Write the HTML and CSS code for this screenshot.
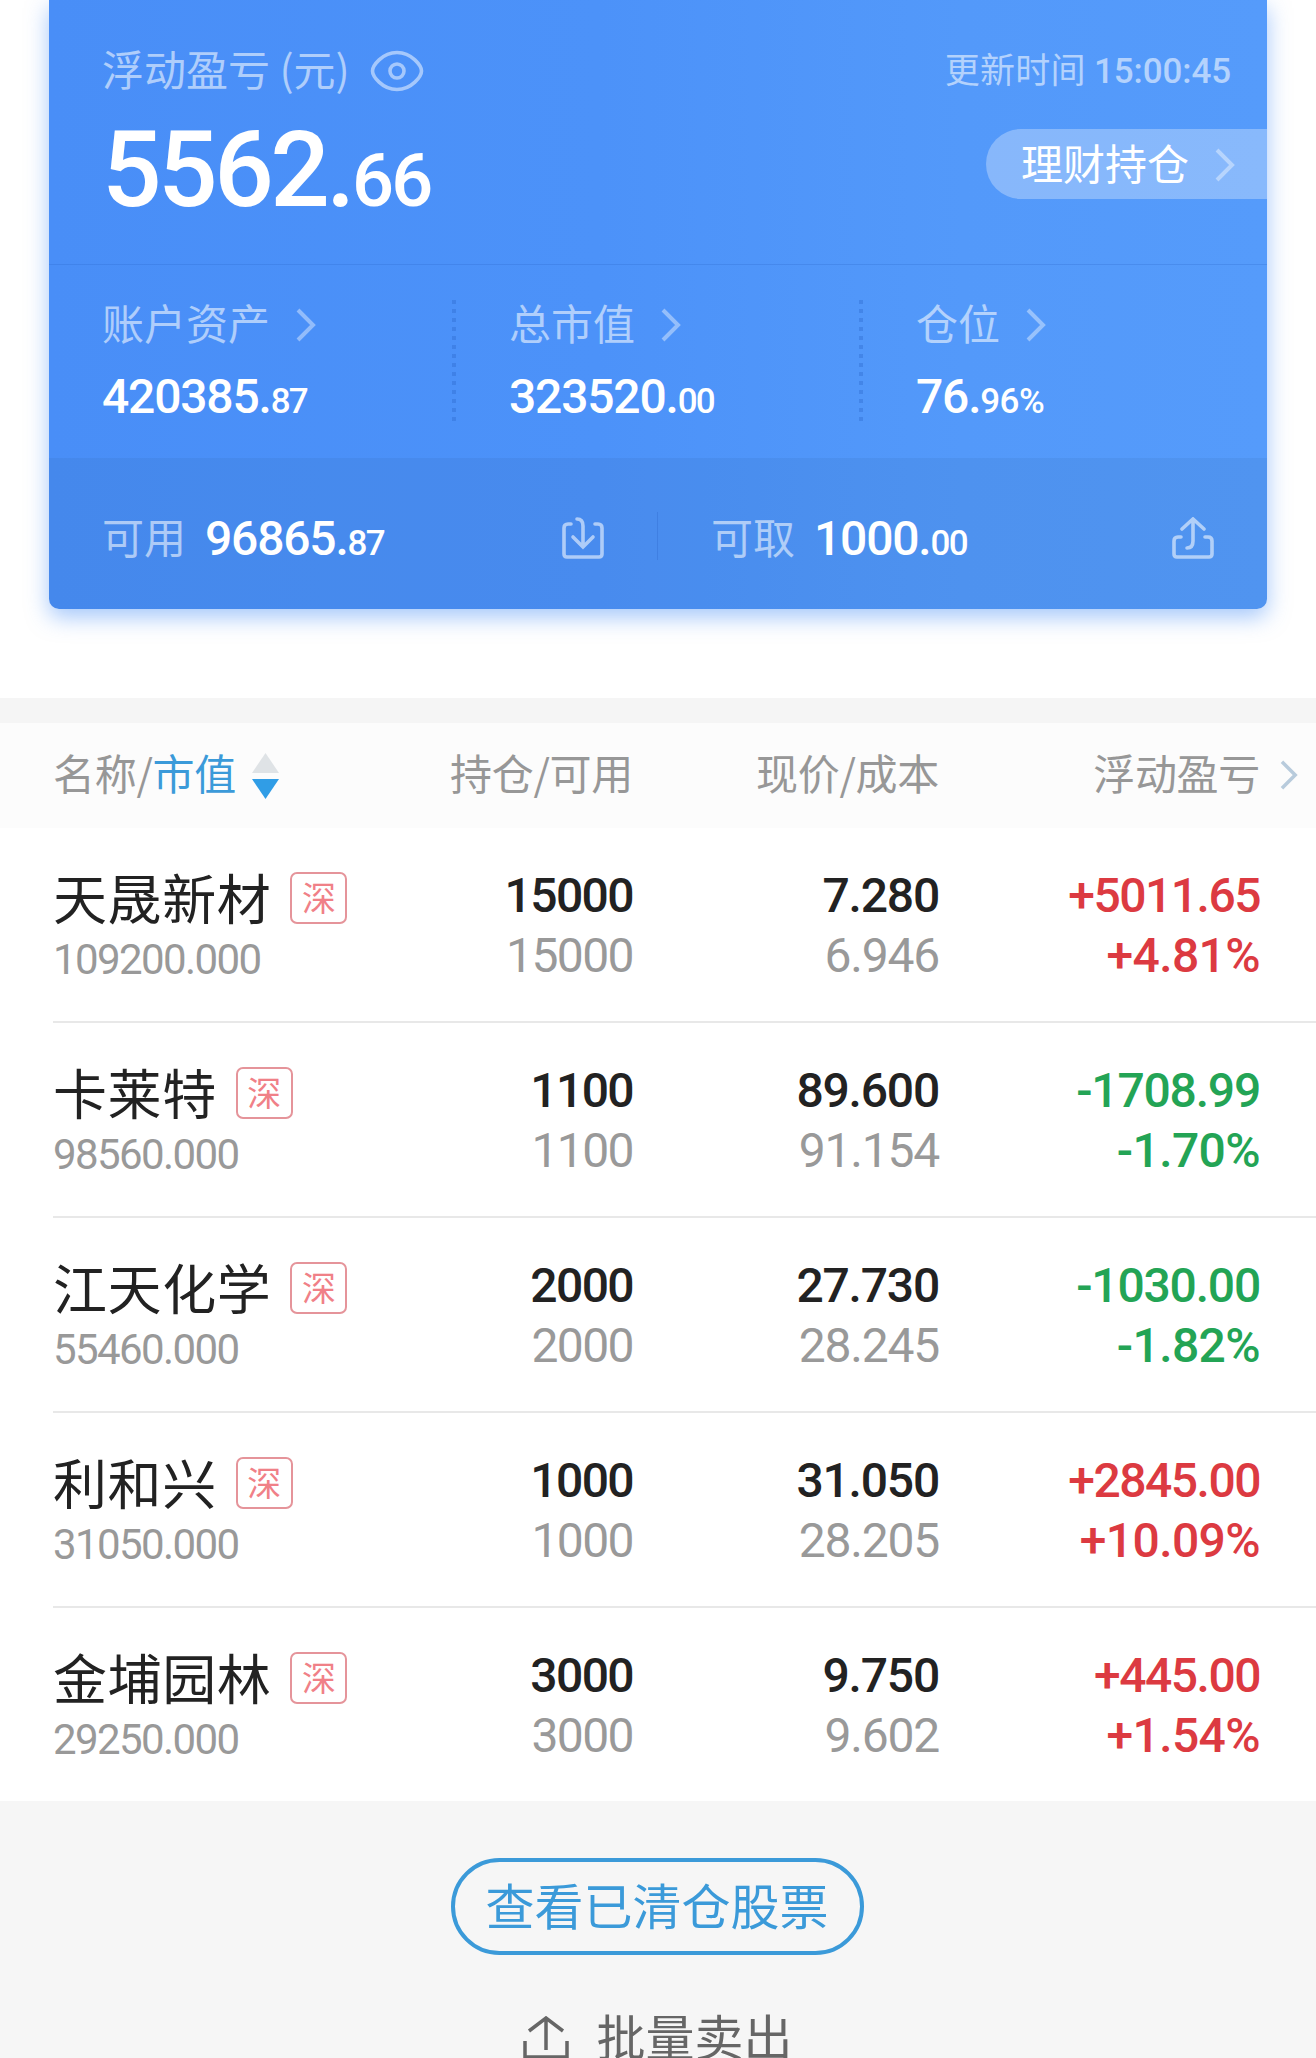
FILE: index.html
```html
<!DOCTYPE html>
<html lang="zh-CN">
<head>
    <meta charset="UTF-8">
    <meta name="viewport" content="width=device-width, initial-scale=1.0">
    <title>我的持仓</title>
    <link rel="stylesheet" href="styles.css">
</head>
<body>
    <!-- Account summary -->
    <section class="summary">
        <div class="card">
            <div class="card-top">
                <div class="top-line">
                    <span class="label">浮动盈亏 (元)</span>
                    <svg class="eye" viewBox="0 0 54 42" fill="none" stroke="currentColor" stroke-width="3.6">
                        <path d="M2.500 21C2.500 16 12 2.500 27 2.500S51.500 16 51.500 21 42 39.500 27 39.500 2.500 26 2.500 21Z"/>
                        <circle cx="27" cy="21" r="7"/>
                    </svg>
                    <span class="update-time">更新时间 <span class="clock">15:00:45</span></span>
                </div>
                <div class="profit-line">
                    <div class="profit">5562.<small>66</small></div>
                    <a class="pill">理财持仓
                        <svg class="chevron" viewBox="0 0 20 34"><path d="M2 2L17 17L2 32"/></svg>
                    </a>
                </div>
            </div>

            <div class="stats">
                <div class="stat">
                    <div class="label">账户资产<svg class="chevron" viewBox="0 0 20 34"><path d="M2 2L17 17L2 32"/></svg></div>
                    <div class="amount">420385.<small>87</small></div>
                </div>
                <div class="dots"></div>
                <div class="stat">
                    <div class="label">总市值<svg class="chevron" viewBox="0 0 20 34"><path d="M2 2L17 17L2 32"/></svg></div>
                    <div class="amount">323520.<small>00</small></div>
                </div>
                <div class="dots"></div>
                <div class="stat">
                    <div class="label">仓位<svg class="chevron" viewBox="0 0 20 34"><path d="M2 2L17 17L2 32"/></svg></div>
                    <div class="amount percent">76.<small>96%</small></div>
                </div>
            </div>

            <div class="cash">
                <div class="cash-item">
                    <span class="label">可用</span>
                    <span class="amount">96865.<small>87</small></span>
                    <svg class="cash-icon" viewBox="0 0 42 42">
                        <path d="M9 7H6Q2 7 2 11V37Q2 40 5 40H37Q40 40 40 37V11Q40 7 36 7H33"/>
                        <path d="M15 2Q21 2 21 9V30M11 20L21 30L31 20"/>
                    </svg>
                </div>
                <div class="cash-item">
                    <span class="label">可取</span>
                    <span class="amount">1000.<small>00</small></span>
                    <svg class="cash-icon" viewBox="0 0 42 42">
                        <path d="M9 20H6Q2 20 2 24V37Q2 40 5 40H37Q40 40 40 37V24Q40 20 36 20H33"/>
                        <path d="M15 31Q21 31 21 24V2M10 12L21 2L32 12"/>
                    </svg>
                </div>
            </div>
        </div>
    </section>

    <!-- Holdings -->
    <section class="holdings">
        <div class="grid-row table-head">
            <div class="sort">名称/<b>市值</b>
                <svg class="sort-icon" viewBox="0 0 27 46"><path fill="#dfe3e6" d="M13.500 0L27 20H0Z"/><path fill="#309de6" d="M0 26H27L13.500 46Z"/></svg>
            </div>
            <div>持仓/可用</div>
            <div>现价/成本</div>
            <div>浮动盈亏</div>
            <svg class="chevron more" viewBox="0 0 20 34"><path d="M2 2L17 17L2 32"/></svg>
        </div>

        <div class="grid-row stock">
            <div class="stock-name">
                <div class="name">天晟新材<span class="badge">深</span></div>
                <div class="worth">109200.000</div>
            </div>
            <div class="pair qty"><p>15000</p><p class="sub">15000</p></div>
            <div class="pair"><p>7.280</p><p class="sub">6.946</p></div>
            <div class="pair up"><p>+5011.65</p><p>+4.81%</p></div>
        </div>
        <div class="grid-row stock">
            <div class="stock-name">
                <div class="name">卡莱特<span class="badge">深</span></div>
                <div class="worth">98560.000</div>
            </div>
            <div class="pair qty"><p>1100</p><p class="sub">1100</p></div>
            <div class="pair"><p>89.600</p><p class="sub">91.154</p></div>
            <div class="pair down"><p>-1708.99</p><p>-1.70%</p></div>
        </div>
        <div class="grid-row stock">
            <div class="stock-name">
                <div class="name">江天化学<span class="badge">深</span></div>
                <div class="worth">55460.000</div>
            </div>
            <div class="pair qty"><p>2000</p><p class="sub">2000</p></div>
            <div class="pair"><p>27.730</p><p class="sub">28.245</p></div>
            <div class="pair down"><p>-1030.00</p><p>-1.82%</p></div>
        </div>
        <div class="grid-row stock">
            <div class="stock-name">
                <div class="name">利和兴<span class="badge">深</span></div>
                <div class="worth">31050.000</div>
            </div>
            <div class="pair qty"><p>1000</p><p class="sub">1000</p></div>
            <div class="pair"><p>31.050</p><p class="sub">28.205</p></div>
            <div class="pair up"><p>+2845.00</p><p>+10.09%</p></div>
        </div>
        <div class="grid-row stock">
            <div class="stock-name">
                <div class="name">金埔园林<span class="badge">深</span></div>
                <div class="worth">29250.000</div>
            </div>
            <div class="pair qty"><p>3000</p><p class="sub">3000</p></div>
            <div class="pair"><p>9.750</p><p class="sub">9.602</p></div>
            <div class="pair up"><p>+445.00</p><p>+1.54%</p></div>
        </div>
    </section>

    <!-- Actions -->
    <footer class="actions">
        <button class="cleared-btn">查看已清仓股票</button>
        <div class="batch-sell">
            <svg class="batch-icon" viewBox="0 0 46 44"><path d="M2 25V41H44V25M23 34V3M6 15L23 2L40 15"/></svg>
            <span>批量卖出</span>
        </div>
    </footer>
</body>
</html>
```

FILE: styles.css
```css
:root {
    --cjk: "Noto Sans CJK SC", sans-serif;
    --num: Roboto, "Noto Sans CJK SC", sans-serif;
    --blue: #3b9ad9;
}

* {
    box-sizing: border-box;
}

body {
    margin: 0;
    height: 2058px;
    overflow: hidden;
    background: #f6f6f6;
    font-family: var(--cjk);
}

p {
    margin: 0;
}

/* Summary card */
.summary {
    height: 698px;
    padding: 0 49px;
    background: #fff;
}

.card {
    height: 609px;
    overflow: hidden;
    color: #fff;
    background: linear-gradient(90deg, #498ef7, #4c92f9 45%, #5399fa 75%, #559bfb);
    border-radius: 0 0 10px 10px;
    box-shadow: 0 8px 22px rgba(74, 143, 248, 0.5);
}

.card-top {
    height: 265px;
    padding: 38px 0 0 53px;
    border-bottom: 1px solid rgba(40, 100, 200, 0.25);
}

.label {
    display: flex;
    align-items: center;
    height: 60px;
    font-size: 42px;
    line-height: 60px;
    color: rgba(255, 255, 255, 0.56);
    white-space: nowrap;
}

.top-line {
    display: flex;
    align-items: center;
    height: 60px;
    padding-right: 36px;
}

.eye {
    width: 54px;
    height: 42px;
    margin: 5px 0 0 20px;
    color: rgba(255, 255, 255, 0.5);
}

.update-time {
    margin: -1px 0 0 auto;
    font-size: 35px;
    letter-spacing: 0.3px;
    color: rgba(255, 255, 255, 0.56);
}

.clock {
    font-family: var(--num);
    font-weight: 500;
    letter-spacing: -0.1px;
}

.profit-line {
    display: flex;
    align-items: center;
    justify-content: space-between;
    height: 110px;
    margin-top: 17px;
}

.profit {
    margin-top: 11px;
    font-family: var(--num);
    font-size: 105px;
    font-weight: 500;
    line-height: 110px;
    letter-spacing: -3.6px;
}

.profit small {
    font-size: 74px;
    letter-spacing: -2.7px;
}

.pill {
    display: flex;
    align-items: center;
    width: 281px;
    height: 70px;
    margin-bottom: 12px;
    padding: 0 0 4px 35px;
    font-size: 42px;
    line-height: 66px;
    background: rgba(255, 255, 255, 0.3);
    border-radius: 35px 0 0 35px;
}

.chevron {
    width: 20px;
    height: 34px;
    margin: 5px 0 0 26px;
    fill: none;
    stroke: rgba(255, 255, 255, 0.4);
    stroke-width: 4;
}

/* Account figures */
.stats {
    display: flex;
    height: 193px;
    padding-top: 27px;
}

.stat {
    width: 403px;
    padding-left: 53px;
}

.dots {
    width: 4px;
    height: 121px;
    margin-top: 8px;
    background: repeating-linear-gradient(rgba(40, 100, 200, 0.35) 0 4px, transparent 4px 9px);
}

.amount {
    font-family: var(--num);
    font-size: 48px;
    font-weight: 500;
    line-height: 60px;
    letter-spacing: -1.2px;
}

.amount small {
    font-size: 35px;
    letter-spacing: -1.7px;
}

.percent small {
    letter-spacing: -0.6px;
}

.stat .amount {
    margin-top: 15px;
}

/* Cash bar */
.cash {
    display: flex;
    align-items: center;
    height: 151px;
    padding-top: 5px;
    background: rgba(30, 80, 130, 0.09);
}

.cash-item {
    display: flex;
    align-items: center;
    width: 609px;
    height: 48px;
    padding: 0 53px;
}

.cash-item:first-child {
    border-right: 1px solid rgba(40, 100, 200, 0.3);
}

.cash .amount {
    margin: 11px 0 0 19px;
}

.cash-icon {
    width: 42px;
    height: 42px;
    margin: 3px 0 0 auto;
    fill: none;
    stroke: rgba(255, 255, 255, 0.56);
    stroke-width: 3.6;
    stroke-linecap: round;
}

/* Holdings table */
.holdings {
    border-top: 25px solid #f5f5f5;
    background: #fff;
}

.grid-row {
    display: grid;
    grid-template-columns: 351px 229px 306px 321px 55px;
    padding-left: 53px;
    text-align: right;
}

.table-head {
    align-items: center;
    height: 105px;
    padding-bottom: 7px;
    font-size: 42px;
    line-height: 60px;
    letter-spacing: -0.3px;
    color: #979797;
    background: #fcfcfc;
}

.sort {
    display: flex;
    align-items: center;
}

.sort b {
    font-weight: 400;
    color: var(--blue);
}

.sort-icon {
    width: 27px;
    height: 46px;
    margin: 7px 0 0 16px;
}

.more {
    width: 18px;
    height: 30px;
    margin: 5px 0 0 20px;
    stroke: #b8cbdc;
}

.stock {
    position: relative;
    height: 195px;
    padding-top: 38px;
}

.stock:last-child {
    height: 193px;
}

.stock:not(:last-child)::after {
    content: "";
    position: absolute;
    left: 53px;
    right: 0;
    bottom: 0;
    height: 2px;
    background: #e8e8e8;
}

.stock-name {
    text-align: left;
}

.name {
    display: flex;
    align-items: center;
    height: 60px;
    font-size: 54px;
    letter-spacing: 0.6px;
    color: #222;
}

.badge {
    width: 57px;
    height: 52px;
    margin: 4px 0 0 19px;
    font-size: 34px;
    line-height: 46px;
    letter-spacing: 0;
    text-align: center;
    color: #f08087;
    border: 2px solid #e5949a;
    border-radius: 7px;
}

.worth {
    margin-top: 4px;
    font-family: var(--num);
    font-size: 42px;
    font-weight: 450;
    line-height: 60px;
    letter-spacing: -1.6px;
    color: #999;
}

.pair {
    font-family: var(--num);
    font-size: 48px;
    font-weight: 500;
    line-height: 60px;
    letter-spacing: -1.2px;
    color: #222;
}

.pair .sub {
    font-weight: 450;
    color: #999;
}

.qty {
    letter-spacing: -1.6px;
}

.up {
    letter-spacing: -1.5px;
    color: #dc3a41;
}

.down {
    color: #23a455;
}

/* percentage line */
.up p + p,
.down p + p {
    letter-spacing: -0.6px;
}

/* Footer */
.actions {
    display: flex;
    flex-direction: column;
    align-items: center;
    padding: 57px 2px 0 0;
}

.cleared-btn {
    width: 413px;
    height: 97px;
    padding: 0 0 5px;
    font-family: var(--cjk);
    font-size: 49px;
    line-height: 80px;
    white-space: nowrap;
    color: var(--blue);
    background: none;
    border: 4px solid var(--blue);
    border-radius: 49px;
}

.batch-sell {
    display: flex;
    align-items: center;
    height: 70px;
    margin: 45px 0 0 2px;
    font-size: 49px;
    line-height: 70px;
    color: #666;
}

.batch-icon {
    width: 46px;
    height: 44px;
    margin: 5px 27px 0 0;
    fill: none;
    stroke: currentColor;
    stroke-width: 3.5;
}
```
